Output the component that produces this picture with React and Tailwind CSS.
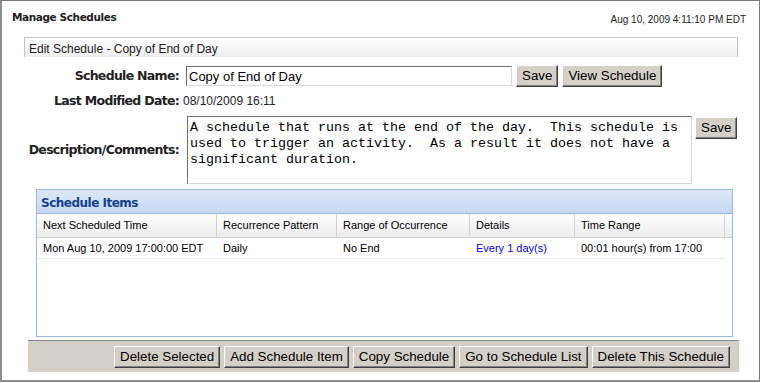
import React from "react";

const btn =
  "bg-[#d4d0c8] border border-t-white border-l-white border-r-[#404040] border-b-[#404040] shadow-[inset_-1px_-1px_0_#808080] px-[5px] h-[22px] text-[13.33px] leading-none text-black whitespace-nowrap";

const label =
  "w-[155px] text-right text-[12.5px] font-bold font-['DejaVu_Sans',sans-serif] tracking-[-0.7px] text-[#222]";

const columns = [
  { label: "Next Scheduled Time", w: "w-[180px]" },
  { label: "Recurrence Pattern", w: "w-[120px]" },
  { label: "Range of Occurrence", w: "w-[133px]" },
  { label: "Details", w: "w-[105px]" },
  { label: "Time Range", w: "w-[150px]" },
];

const row = [
  "Mon Aug 10, 2009 17:00:00 EDT",
  "Daily",
  "No End",
  "Every 1 day(s)",
  "00:01 hour(s) from 17:00",
];

export default function App() {
  return (
    <div className="w-[761px] h-[383px] bg-white font-['Liberation_Sans',Arial,sans-serif] text-black">
      <div className="w-[760px] h-[382px] border border-[#7a7a7a] border-l-2 border-b-2 border-l-[#8c8c8c] border-b-[#8c8c8c] flex flex-col">
        {/* title row */}
        <div className="flex justify-between items-start pl-[10px] pr-[13px] pt-[9px] h-[36px]">
          <span className="text-[10.5px] font-bold font-['DejaVu_Sans',sans-serif] tracking-[-0.4px] text-[#222]">Manage Schedules</span>
          <span className="text-[10px] mt-[2px] text-[#222]">Aug 10, 2009 4:11:10 PM EDT</span>
        </div>

        <div className="ml-[22px] w-[714px]">
          {/* panel header */}
          <div className="h-[20px] border-t border-l border-r border-[#c4c4c4] bg-gradient-to-b from-white to-[#ededed] pl-[4px] pt-[2px] text-[12px] text-[#222]">
            Edit Schedule - Copy of End of Day
          </div>

          {/* schedule name */}
          <div className="flex items-center mt-[8px] h-[22px]">
            <div className={label}>Schedule Name:</div>
            <input
              defaultValue="Copy of End of Day"
              className="ml-[7px] w-[326px] h-[20px] border border-t-[#707070] border-l-[#707070] border-b-[#d8d8d8] border-r-[#d8d8d8] px-[2px] text-[13px] outline-none"
            />
            <button className={btn + " ml-[4px]"}>Save</button>
            <button className={btn + " ml-[4px]"}>View Schedule</button>
          </div>

          {/* last modified */}
          <div className="flex items-center mt-[3px] h-[22px]">
            <div className={label}>Last Modified Date:</div>
            <span className="ml-[4px] text-[12px] text-[#222]">08/10/2009 16:11</span>
          </div>

          {/* description */}
          <div className="flex items-start mt-[4px]">
            <div className={label + " h-[68px] flex items-center justify-end"}>Description/Comments:</div>
            <textarea
              defaultValue="A schedule that runs at the end of the day.  This schedule is used to trigger an activity.  As a result it does not have a significant duration."
              className="ml-[8px] w-[505px] h-[68px] resize-none border border-t-[#707070] border-l-[#707070] border-b-[#d8d8d8] border-r-[#d8d8d8] px-[2px] pt-[3px] font-['Liberation_Mono','Courier_New',monospace] text-[13.33px] leading-[16px] outline-none"
            />
            <button className={btn + " ml-[3px] mt-[1px]"}>Save</button>
          </div>

          {/* schedule items */}
          <div className="ml-[12px] mt-[5px] w-[697px] h-[148px] border border-[#99bbe8] flex flex-col">
            <div className="h-[24px] bg-gradient-to-b from-[#dde8f6] to-[#c6d8f1] border-b border-[#99bbe8] pl-[4px] pt-[4px] text-[12px] font-bold font-['DejaVu_Sans',sans-serif] tracking-[-0.5px] text-[#15428b]">
              Schedule Items
            </div>
            <div className="flex h-[24px] border-b border-[#d0d0d0] bg-gradient-to-b from-white to-[#ececec]">
              {columns.map((c) => (
                <div key={c.label} className={`${c.w} border-r border-[#d0d0d0] pl-[6px] flex items-center text-[11px]`}>
                  {c.label}
                </div>
              ))}
            </div>
            <div className="flex h-[21px] border-b border-[#ededed] w-[688px]">
              {row.map((v, i) => (
                <div
                  key={i}
                  className={`${columns[i].w} pl-[6px] flex items-center text-[11px] ${i === 3 ? "text-[#0000ff]" : ""}`}
                >
                  {v}
                </div>
              ))}
            </div>
          </div>

          {/* button bar */}
          <div className="mt-[3px] ml-[4px] w-[711px] h-[32px] bg-[#d4d0c8] border-t border-[#8a8a8a] flex items-center justify-end gap-[4px] pr-[9px]">
            <button className={btn}>Delete Selected</button>
            <button className={btn}>Add Schedule Item</button>
            <button className={btn}>Copy Schedule</button>
            <button className={btn}>Go to Schedule List</button>
            <button className={btn}>Delete This Schedule</button>
          </div>
        </div>
      </div>
    </div>
  );
}
